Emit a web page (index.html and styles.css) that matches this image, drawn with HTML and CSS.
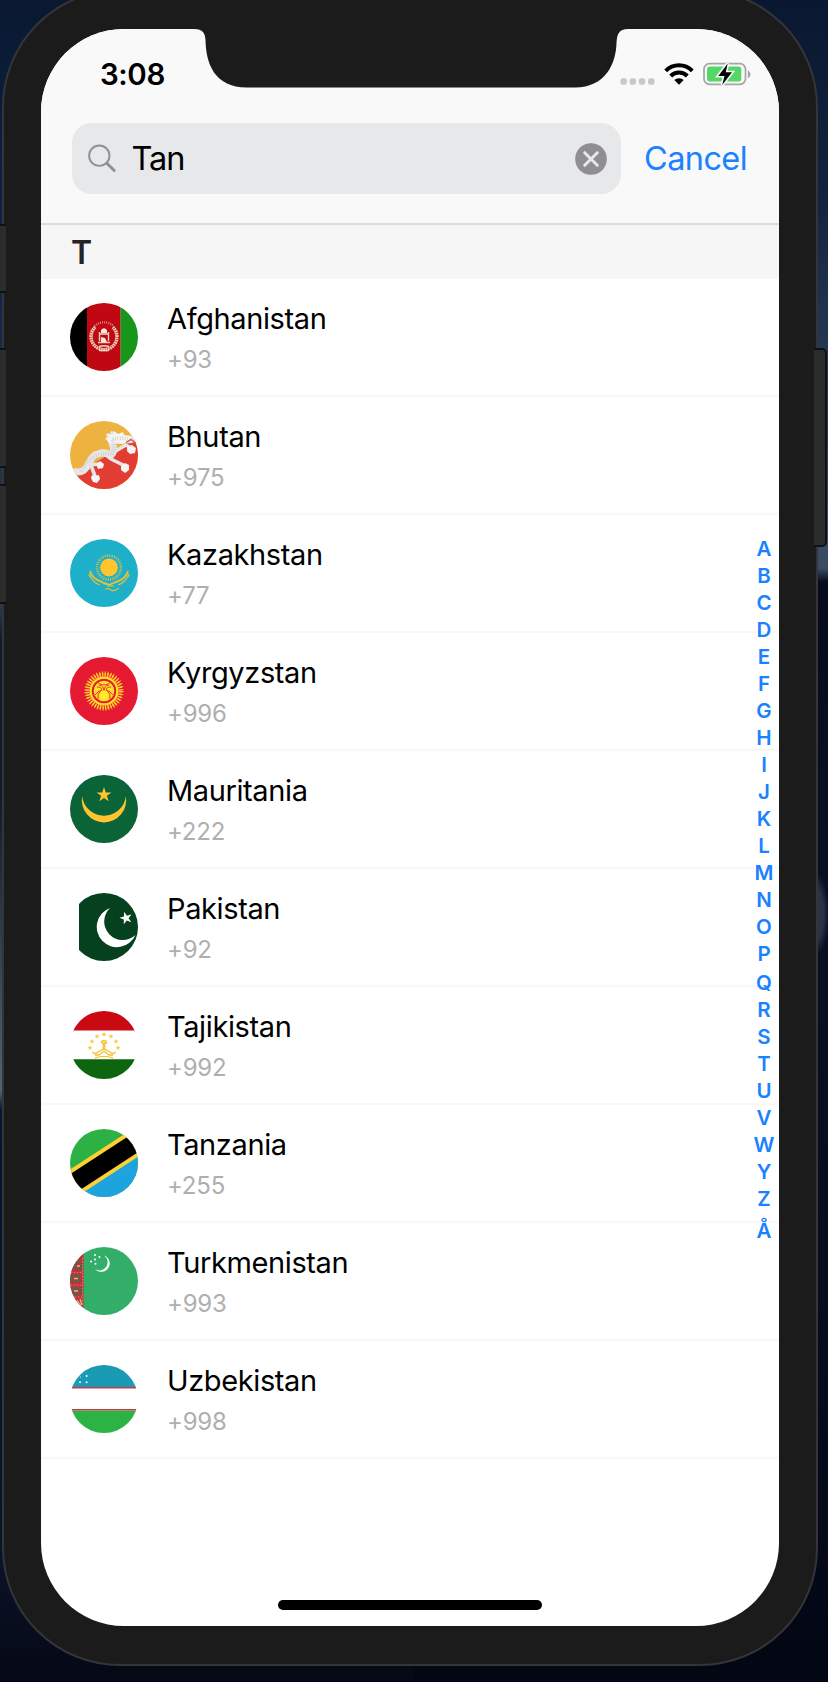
FILE: index.html
```html
<!DOCTYPE html>
<html lang="en">
<head>
<meta charset="utf-8">
<title>Country picker</title>
<link rel="stylesheet" href="styles.css">
</head>
<body>
<div class="desktop">
  <i class="key key-mute"></i><i class="key key-up"></i><i class="key key-down"></i><i class="key key-power"></i>
  <div class="phone">
    <main class="screen">
      <svg class="notch" viewBox="0 0 434 60"><path d="M0 0C9 0 11 4 11.500 11C12 34 20 58.500 53 58.500H381C412 58.500 422 34 422.500 14C423 5 425 0 434 0Z" fill="#1b1b1b"/></svg>
      <header class="top">
        <div class="status">
          <span class="time">3:08</span>
          <span class="status-icons">
            <svg class="cell" viewBox="0 0 36 7" fill="#c8c8ca"><rect x=".5" y=".3" width="6.300" height="6.500" rx="2"/><rect x="9.700" y=".3" width="6.300" height="6.500" rx="2"/><rect x="18.900" y=".3" width="6.300" height="6.500" rx="2"/><rect x="28.100" y=".3" width="6.300" height="6.500" rx="2"/></svg>
            <svg class="wifi" viewBox="0 0 30 22"><g fill="none" stroke="#000" stroke-width="4"><path d="M1.700 7.900A18.500 18.500 0 0 1 28.300 7.900"/><path d="M6.700 13A11.700 11.700 0 0 1 23.300 13"/></g><path d="M10.300 17.100a6.600 6.600 0 0 1 9.400 0L15 21.800Z"/></svg>
            <svg class="battery" viewBox="0 0 48 24"><rect x="1" y="1.700" width="41.500" height="20.600" rx="5.500" fill="none" stroke="#a5a5a7" stroke-width="1.700"/><path d="M44.900 8.200q2.600 1.400 2.600 4t-2.600 4Z" fill="#a5a5a7"/><rect x="4" y="4.600" width="34.300" height="14.900" rx="2.800" fill="#53d769"/><path d="M24.700 1.500L15.300 14h6.200l-2.300 9L29 10.300h-6.200Z" stroke="#f9f9f9" stroke-width="3.200"/><path d="M24.700 1.500L15.300 14h6.200l-2.300 9L29 10.300h-6.200Z"/></svg>
          </span>
        </div>
        <div class="search-row">
          <div class="search">
            <svg class="glass" viewBox="0 0 30 30" fill="none" stroke="#919194" stroke-linecap="round"><circle cx="12.300" cy="11.700" r="10.200" stroke-width="1.900"/><path d="M19.800 19.200L27.200 26.400" stroke-width="2.900"/></svg>
            <span class="query">Tan</span>
            <svg class="clear" viewBox="0 0 32 32"><circle cx="16" cy="16" r="15.800" fill="#8e8e93"/><path d="M9.700 9.700l12.600 12.600M22.300 9.700L9.700 22.300" stroke="#e6e8ea" stroke-width="3" stroke-linecap="round"/></svg>
          </div>
          <a class="cancel">Cancel</a>
        </div>
      </header>
      <h2 class="section">T</h2>
      <ul class="list">
        <li class="row"><svg class="flag" viewBox="0 0 68 68"><path fill="#000" d="M0 0h17v68H0z"/><path fill="#bf0811" d="M17 0h33.700v68H17z"/><path fill="#16961b" d="M50.700 0H68v68H50.700z"/><g fill="none" stroke="#eed2bb"><path d="M25 24A13.200 13.200 0 1 0 43 24" stroke-width="3" stroke-dasharray="1.700 .65"/><path d="M26 25A11.800 11.800 0 1 0 42 25" stroke-width=".7"/><path d="M24.500 23Q34 15.500 43.500 23" stroke-width="2.200" stroke-dasharray="1 1.100" opacity=".65"/><path d="M29.500 38V29M38.500 38V29M28 39.500h12M29 31h10M29 43.500q5-1.500 10 0M29 47.500h10" stroke-width="1.400"/></g><path fill="#f5e7dc" d="M31 30v-3q3-3.500 6 0v3zM31 34l4 1 2 4h-6z"/></svg><div><div class="name">Afghanistan</div><div class="code">+93</div></div></li>
        <li class="row"><svg class="flag" viewBox="0 0 68 68"><path fill="#edb240" d="M0 0h68v68H0z"/><path fill="#e23d32" d="M0 56.700L68 16v52H0z"/><g fill="none" stroke="#e6e6e6" stroke-linecap="round" stroke-linejoin="round"><path d="M8 51Q15 51 19 42T28 33Q36 30 40 35Q46 31 42 22Q43 14 51 17T63 18" stroke-width="7"/><path d="M20 44l9-1M22 47l3 8M41 38l12 6M44 31l12-7 6 3M5 49l3 1M38 14l5 2M42 12l5 3" stroke-width="3.600"/></g><g fill="#f4f4f4"><path d="M22 54l3 1 4-1 1 4-3 4-4-1-2-4zM26 43l4-3 4 3-1 4-5 1zM51 45l4-3 4 2v5l-4 3-4-3zM57 26l5-2 4 3-1 5-5 1-3-3z"/><path d="M35 17l4-1-2-3 6 1 1-4 4 3 5-2 1 3 8 1-2 4-7 4-14-1z"/></g><path d="M11 50Q18 37 29 34Q39 32 42 34Q46 24 42 18L53 17 60 19" fill="none" stroke="#c5c5c5" stroke-width="4" stroke-dasharray=".6 1.800"/><path d="M56 21.500l5-3 4 3M59 24l5-2" fill="none" stroke="#d44" stroke-width="1.100"/></svg><div><div class="name">Bhutan</div><div class="code">+975</div></div></li>
        <li class="row"><svg class="flag" viewBox="0 0 68 68"><path fill="#1eb0c9" d="M0 0h68v68H0z"/><circle cx="39" cy="28.500" r="8.900" fill="#ffc42e"/><circle cx="39" cy="28.500" r="11.900" fill="none" stroke="#d8c044" stroke-width="2.600" stroke-dasharray="1.050 1.286"/><g fill="none" stroke="#e5c039"><path d="M20 32q2 8 12 11l3 2M58 32q-2 8-12 11l-7 3-5-2" stroke-width="1.900"/><path d="M19 35q4 9 11 11M59 35q-4 9-11 11M20 38l-1-3M58 38l1-3M35 50q4-1 6 1t8-2M37 47h7" stroke-width="1.200"/></g></svg><div><div class="name">Kazakhstan</div><div class="code">+77</div></div></li>
        <li class="row"><svg class="flag" viewBox="0 0 68 68"><path fill="#e61933" d="M0 0h68v68H0z"/><circle cx="34" cy="34" r="14.500" fill="#ffde2b"/><circle cx="34" cy="34" r="16.500" fill="none" stroke="#ffd72b" stroke-width="4" stroke-dasharray="1.500 1.092"/><circle cx="34" cy="34" r="18.500" fill="none" stroke="#ffc82b" stroke-width="2.600" stroke-dasharray=".8 2.106" stroke-dashoffset="-.35"/><circle cx="34" cy="34" r="11.300" fill="none" stroke="#e61933" stroke-width="1.900"/><g fill="none" stroke="#e63b28" stroke-width="1"><path d="M29 28q5 1 5 6M39 28q-5 1-5 6M27 30q5 0 5 3-4 1-7 5M41 30q-5 0-5 3 4 1 7 5M31 33q-4 4-3 9M37 33q4 4 3 9M28 26q6 4 12 0"/></g><ellipse cx="34" cy="38.500" rx="3.600" ry="5" fill="#ffec2c"/></svg><div><div class="name">Kyrgyzstan</div><div class="code">+996</div></div></li>
        <li class="row"><svg class="flag" viewBox="0 0 68 68"><path fill="#0b6338" d="M0 0h68v68H0z"/><path fill="#ffc42d" d="M12.200 21A22.200 22.200 0 1 0 55.800 21A21.900 21.900 0 0 1 12.200 21Z"/><path fill="#ffc42d" d="M34 12l1.800 5.400h5.600l-4.500 3.400 1.700 5.500-4.600-3.400-4.600 3.400 1.700-5.500-4.500-3.400h5.600z"/></svg><div><div class="name">Mauritania</div><div class="code">+222</div></div></li>
        <li class="row"><svg class="flag" viewBox="0 0 68 68"><path fill="#fff" d="M0 0h9v68H0z"/><path fill="#05401f" d="M9 0h59v68H9z"/><path fill="#fff" d="M40 15A20.200 20.200 0 1 0 65.500 42A18.200 18.200 0 1 1 40 15Z"/><path fill="#fff" transform="rotate(-16 56 25)" d="M56 18.500l1.500 4.500h4.800l-3.800 2.900 1.400 4.600-3.900-2.800-3.900 2.800 1.400-4.600-3.800-2.900h4.800z"/></svg><div><div class="name">Pakistan</div><div class="code">+92</div></div></li>
        <li class="row"><svg class="flag" viewBox="0 0 68 68"><path fill="#fff" d="M0 0h68v68H0z"/><path fill="#ca0a13" d="M0 0h68v19.500H0z"/><path fill="#0e650f" d="M0 48.300h68V68H0z"/><g fill="#f8cc3e"><path id="s" d="M34 21l.7 1.600h1.800l-1.400 1.100.5 1.800-1.600-1-1.600 1 .5-1.800-1.400-1.100h1.800z"/><use href="#s" x="-7" y="2"/><use href="#s" x="7" y="2"/><use href="#s" x="-12" y="7"/><use href="#s" x="12" y="7"/><use href="#s" x="-14" y="13.500"/><use href="#s" x="14" y="13.500"/></g><g fill="none" stroke="#f3c332" stroke-width="1.300"><path d="M31.500 32q0-2.500 2.500-2.500t2.500 2.500h-5M33.300 32v6M34.700 32v6M22 41q3 3 6 0l6-3 6 3q3 3 6 0M25 44h4l5-4 5 4h4M25 46.800q9-3 18 0"/></g></svg><div><div class="name">Tajikistan</div><div class="code">+992</div></div></li>
        <li class="row"><svg class="flag" viewBox="0 0 68 68"><path fill="#2eb144" d="M0 0h68v68H0z"/><path fill="#1da4df" d="M-10 63L78 5v63h-88z"/><path d="M-20 69.400L88-1" stroke="#ffd034" stroke-width="26.400"/><path d="M-20 69.400L88-1" stroke="#000" stroke-width="18.600"/></svg><div><div class="name">Tanzania</div><div class="code">+255</div></div></li>
        <li class="row"><svg class="flag" viewBox="0 0 68 68"><path fill="#32ae69" d="M0 0h68v68H0z"/><path fill="#c62e3d" d="M0 0h13.500v68H0z"/><g fill="none" stroke="#387446" stroke-width="1.700"><ellipse cx="8" cy="19" rx="3.800" ry="3"/><ellipse cx="5.500" cy="31.500" rx="4" ry="3.200"/><ellipse cx="7" cy="44" rx="4" ry="3.200"/></g><path d="M1 25.500h11M1 38h11M2 50h10M12.500 11v48" stroke="#da7a6c" stroke-width="1" stroke-dasharray="1.500 1.500"/><path d="M7 19h3M4 31.500h4M4 44h4M7 53l4 6M10 52l2 6" stroke="#e8b48a" stroke-width="1.300"/><path fill="#fff" d="M34 8.500A8.400 8.400 0 1 1 25 22A7.600 7.600 0 0 0 34 8.500Z"/><g fill="#fff"><circle cx="25" cy="8" r="1"/><circle cx="29.500" cy="10" r="1"/><circle cx="25" cy="12.500" r="1"/><circle cx="21" cy="14.500" r="1"/><circle cx="25.500" cy="16.800" r="1"/></g></svg><div><div class="name">Turkmenistan</div><div class="code">+993</div></div></li>
        <li class="row"><svg class="flag" viewBox="0 0 68 68"><path fill="#fff" d="M0 0h68v68H0z"/><path fill="#1a9ab5" d="M0 0h68v22H0z"/><path fill="#2db343" d="M0 45.500h68V68H0z"/><path fill="#c8384b" d="M0 22h68v1.500H0zM0 44h68v1.500H0z"/><g fill="#e8fbff"><circle cx="10" cy="17.300" r="1"/><circle cx="16.600" cy="17.300" r="1"/><circle cx="16.600" cy="11" r="1"/><circle cx="10.500" cy="12" r=".6"/></g></svg><div><div class="name">Uzbekistan</div><div class="code">+998</div></div></li>
      </ul>
      <nav class="index"><span>A</span><span>B</span><span>C</span><span>D</span><span>E</span><span>F</span><span>G</span><span>H</span><span>I</span><span>J</span><span>K</span><span>L</span><span>M</span><span>N</span><span>O</span><span>P</span><span class="index-q">Q</span><span>R</span><span>S</span><span>T</span><span>U</span><span>V</span><span>W</span><span>Y</span><span>Z</span><span class="index-ring">Å</span></nav>
      <i class="home"></i>
    </main>
  </div>
</div>
</body>
</html>
```
FILE: styles.css
```css
* { box-sizing: border-box; }
body { margin: 0; font-family: Inter, "Liberation Sans", sans-serif; color: #000; }
.desktop {
  position: relative; width: 828px; height: 1682px; overflow: hidden; padding: 0 0 16px 2px;
  background:
    radial-gradient(ellipse 14px 42px at 815px 914px, #2c3346 60%, transparent 100%),
    linear-gradient(#0a1730, #14233d 200px, #2b3e58 400px, #3b4d65 568px, #070b1b 582px, #081022 850px, #070c1e 1300px, #030714 1682px) right / 414px 100% no-repeat,
    linear-gradient(#0a1931, #0c2144 220px, #1c2c48 400px, #2c3d55 600px, #141b2c 640px, #141b2c 800px, #56616f 1090px, #0b1530 1110px, #0b1329 1560px, #050814 1682px);
}
.phone {
  width: 816px; height: 1677px; margin-top: -11px; padding: 38px 37px;
  background: #1b1b1b; border: 2px solid #333539; border-radius: 118px;
}
.screen {
  position: relative; width: 738px; height: 1597px; overflow: hidden;
  background: #fff; border-radius: 83px; display: flex; flex-direction: column;
}
.notch { position: absolute; top: 0; left: 153px; width: 434px; height: 60px; }
.top { height: 196px; background: #f9f9f9; border-bottom: 2px solid #dcdcdd; }
.status { height: 94px; padding: 0 28.500px 0 59px; display: flex; justify-content: space-between; align-items: flex-start; }
.time { margin-top: 27px; font-size: 29.500px; line-height: 36px; font-weight: 600; letter-spacing: -.4px; }
.status-icons { display: flex; align-items: flex-start; padding-top: 33px; }
.cell { width: 36px; height: 7px; margin: 16px 8px 0 0; }
.wifi { width: 30px; height: 22px; margin: 1px 9px 0 0; }
.battery { width: 48px; height: 24px; }
.search-row { display: flex; align-items: center; padding: 0 32px 0 31px; justify-content: space-between; }
.search { width: 549px; height: 71px; border-radius: 20px; background: #e6e8ea; display: flex; align-items: center; padding: 0 14px 0 14.500px; }
.glass { width: 30px; height: 30px; }
.query { flex: 1; margin-left: 15px; font-size: 32.500px; line-height: 40px; letter-spacing: -1.100px; }
.clear { width: 32px; height: 32px; }
.cancel { color: #1a82ff; font-size: 32.500px; line-height: 40px; letter-spacing: -.6px; }
.section { margin: 0; height: 54px; padding: 0 30px; background: #f6f6f6; color: #242426; font-size: 32px; line-height: 56px; font-weight: 600; }
.list { margin: 0; padding: 0; list-style: none; }
.row { height: 118px; display: flex; align-items: flex-start; gap: 29px; padding: 24px 29px 0; border-bottom: 2px solid #f8f8f9; }
.flag { width: 68px; height: 68px; border-radius: 50%; }
.name { margin-top: -2px; font-size: 29px; line-height: 36px; letter-spacing: -.38px; }
.code { margin-top: 9px; font-size: 24px; line-height: 28px; letter-spacing: -.2px; color: #afafaf; }
.index { position: absolute; top: 505.500px; right: 5px; width: 20px; display: flex; flex-direction: column; align-items: center; color: #1a82ff; font-size: 20.500px; font-weight: 600; }
.index span { height: 27.060px; line-height: 27px; }
.index .index-q { margin-top: 1.500px; }
.index .index-ring { margin-top: 4.500px; }
.home { position: absolute; left: 237px; bottom: 16px; width: 264px; height: 10px; border-radius: 5px; background: #000; }
.key { position: absolute; z-index: 1; background: #2c2c2c; border: 2px solid #101114; border-right-width: 0; }
.key-mute { left: -8px; top: 224px; width: 14px; height: 69px; }
.key-up { left: -8px; top: 348px; width: 14px; height: 120px; }
.key-down { left: -8px; top: 484px; width: 14px; height: 120px; }
.key-power { left: 812px; top: 348px; width: 15px; height: 199px; border-radius: 0 5px 5px 0; border-right-width: 2px; border-left-width: 0; clip-path: inset(0 0 0 2px); }
```
